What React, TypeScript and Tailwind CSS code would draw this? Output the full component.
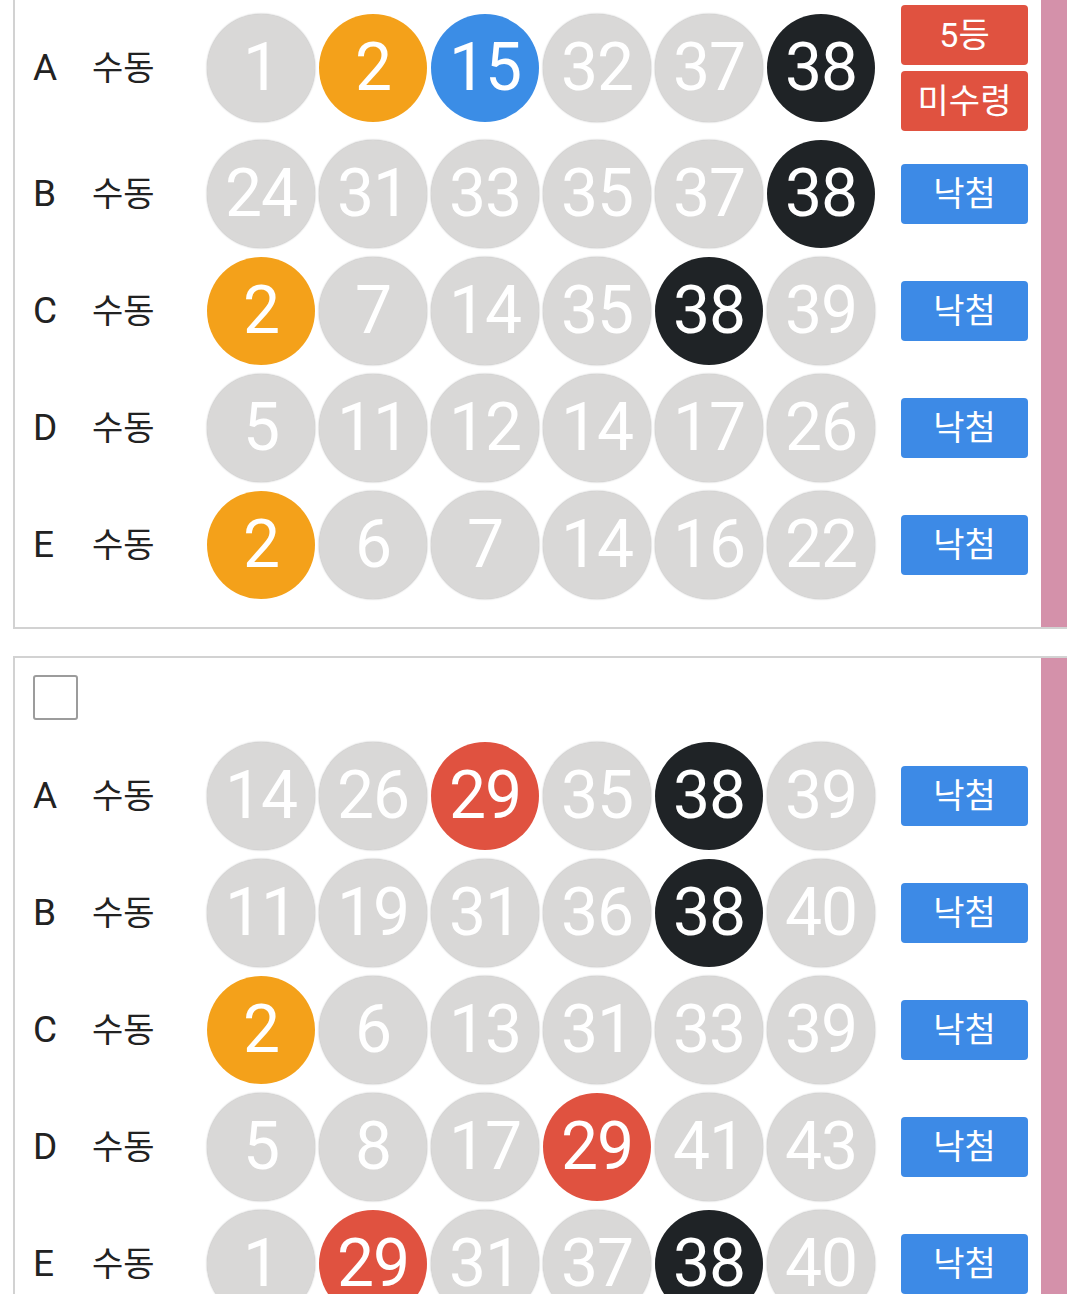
type Tone = 'gray' | 'orange' | 'blue' | 'black' | 'red';

type Line = {
  label: string;
  balls: [number, Tone][];
  result: 'lose' | 'win';
};

const toneClass: Record<Tone, string> = {
  gray: 'bg-[#d9d8d7] shadow-[0_0_2px_rgba(0,0,0,0.35)]',
  orange: 'bg-[#f4a11a]',
  blue: 'bg-[#3b8de6]',
  black: 'bg-[#1f2326]',
  red: 'bg-[#e05240]',
};

const g = (n: number): [number, Tone] => [n, 'gray'];

const firstGame: Line[] = [
  { label: 'A', balls: [g(1), [2, 'orange'], [15, 'blue'], g(32), g(37), [38, 'black']], result: 'win' },
  { label: 'B', balls: [g(24), g(31), g(33), g(35), g(37), [38, 'black']], result: 'lose' },
  { label: 'C', balls: [[2, 'orange'], g(7), g(14), g(35), [38, 'black'], g(39)], result: 'lose' },
  { label: 'D', balls: [g(5), g(11), g(12), g(14), g(17), g(26)], result: 'lose' },
  { label: 'E', balls: [[2, 'orange'], g(6), g(7), g(14), g(16), g(22)], result: 'lose' },
];

const secondGame: Line[] = [
  { label: 'A', balls: [g(14), g(26), [29, 'red'], g(35), [38, 'black'], g(39)], result: 'lose' },
  { label: 'B', balls: [g(11), g(19), g(31), g(36), [38, 'black'], g(40)], result: 'lose' },
  { label: 'C', balls: [[2, 'orange'], g(6), g(13), g(31), g(33), g(39)], result: 'lose' },
  { label: 'D', balls: [g(5), g(8), g(17), [29, 'red'], g(41), g(43)], result: 'lose' },
  { label: 'E', balls: [g(1), [29, 'red'], g(31), g(37), [38, 'black'], g(40)], result: 'lose' },
];

function Ball({ n, tone }: { n: number; tone: Tone }) {
  return (
    <div
      className={`${toneClass[tone]} w-[108px] h-[108px] rounded-full flex items-center justify-center text-white text-[66px] leading-none tracking-[-1px]`}
      style={{ fontFamily: 'Roboto, "Noto Sans", sans-serif' }}
    >
      {n}
    </div>
  );
}

function Badge({ text, color }: { text: string; color: 'red' | 'blue' }) {
  return (
    <div
      className={`${color === 'red' ? 'bg-[#e05240]' : 'bg-[#3d8ae6]'} w-[127px] h-[60px] rounded-[4px] flex items-center justify-center text-white text-[34px] leading-none`}
    >
      {text}
    </div>
  );
}

function Row({ line }: { line: Line }) {
  return (
    <div className="flex items-center pl-[18px] pr-[13px]">
      <div className="w-[59px] text-[37px] text-[#222]" style={{ fontFamily: 'Roboto, sans-serif' }}>
        {line.label}
      </div>
      <div className="w-[115px] text-[34px] text-[#222]">수동</div>
      <div className="flex gap-[4px]">
        {line.balls.map(([n, tone], i) => (
          <Ball key={i} n={n} tone={tone} />
        ))}
      </div>
      <div className="ml-[26px] flex flex-col gap-[6px]">
        {line.result === 'win' ? (
          <>
            <Badge text="5등" color="red" />
            <Badge text="미수령" color="red" />
          </>
        ) : (
          <Badge text="낙첨" color="blue" />
        )}
      </div>
    </div>
  );
}

export default function App() {
  return (
    <div
      className="w-[1080px] h-[1294px] overflow-hidden bg-white px-[13px]"
      style={{ fontFamily: 'Roboto, "Noto Sans CJK KR", sans-serif' }}
    >
      {/* first ticket, top edge scrolled off */}
      <div className="flex border-l-2 border-b-2 border-[#d2d2d2]">
        <div className="flex-1 flex flex-col gap-[9px] pt-[5px] pb-[28px]">
          {firstGame.map((line) => (
            <Row key={line.label} line={line} />
          ))}
        </div>
        <div className="w-[26px] bg-[#d491aa]" />
      </div>

      {/* second ticket */}
      <div className="mt-[27px] flex border-l-2 border-t-2 border-[#d2d2d2]">
        <div className="flex-1 flex flex-col pt-[17px]">
          <div className="ml-[18px] w-[45px] h-[45px] border-2 border-[#9c9c9c] rounded-[3px]" />
          <div className="mt-[22px] flex flex-col gap-[9px]">
            {secondGame.map((line) => (
              <Row key={line.label} line={line} />
            ))}
          </div>
        </div>
        <div className="w-[26px] bg-[#d491aa]" />
      </div>
    </div>
  );
}
